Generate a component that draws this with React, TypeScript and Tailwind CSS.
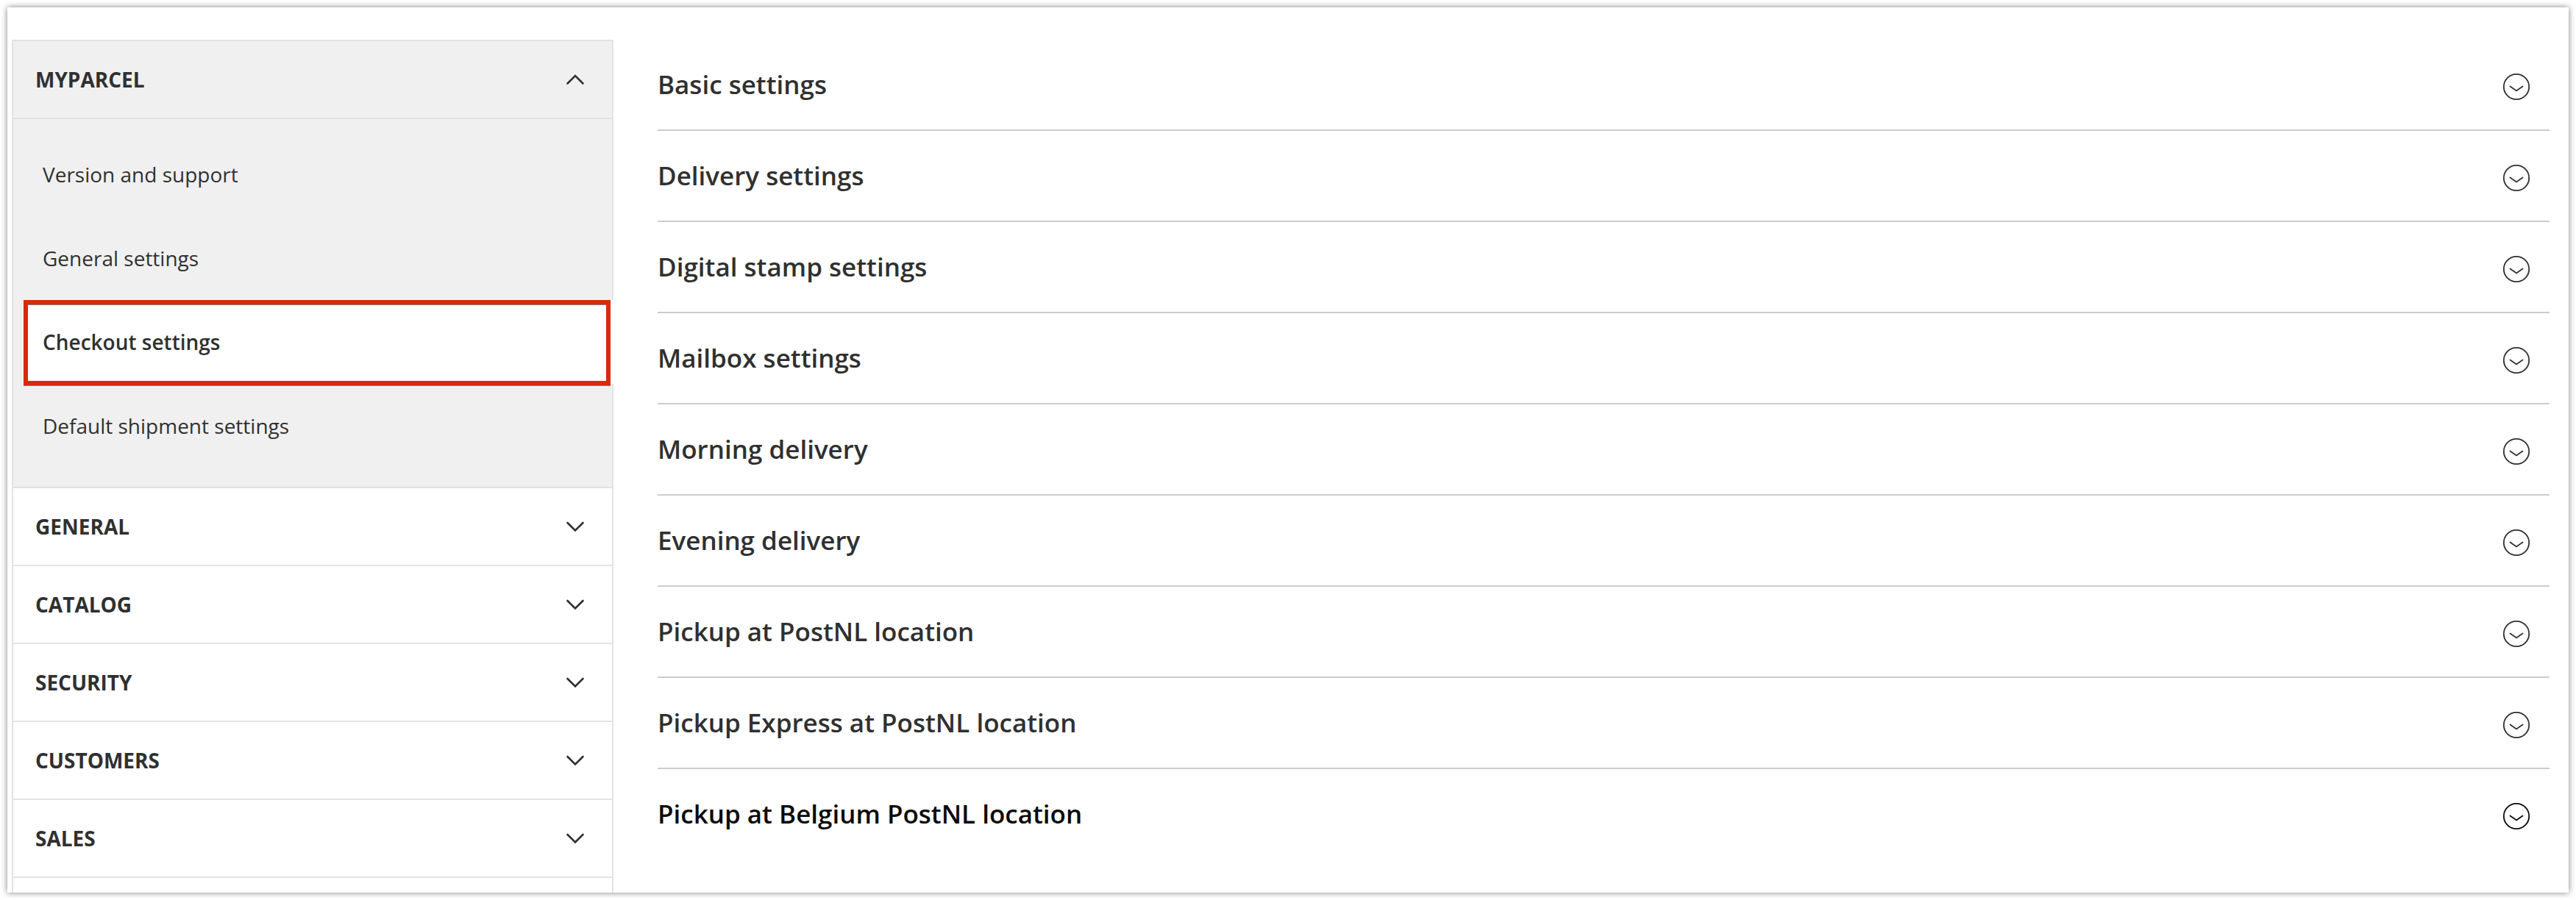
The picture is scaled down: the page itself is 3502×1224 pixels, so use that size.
import { useState } from "react";

const subItems = [
  "Version and support",
  "General settings",
  "Checkout settings",
  "Default shipment settings",
];

const groups = ["General", "Catalog", "Security", "Customers", "Sales"];

const sections = [
  "Basic settings",
  "Delivery settings",
  "Digital stamp settings",
  "Mailbox settings",
  "Morning delivery",
  "Evening delivery",
  "Pickup at PostNL location",
  "Pickup Express at PostNL location",
  "Pickup at Belgium PostNL location",
];

function Chevron({ up = false }: { up?: boolean }) {
  return (
    <svg
      className="h-4 w-7 shrink-0"
      viewBox="0 0 28 16"
      fill="none"
      stroke="currentColor"
      strokeWidth="2.6"
      strokeLinecap="round"
      strokeLinejoin="miter"
      aria-hidden="true"
    >
      <path d={up ? "M3.5 13.5 L14 3 L24.5 13.5" : "M3.5 3 L14 13.5 L24.5 3"} />
    </svg>
  );
}

function CircleChevron() {
  return (
    <svg
      className="mt-1.5 size-10 shrink-0"
      viewBox="0 0 40 40"
      fill="none"
      stroke="currentColor"
      strokeWidth="1.8"
      aria-hidden="true"
    >
      <circle cx="20" cy="20" r="17.2" />
      <path d="M11.5 19.5 L20 25.5 L28.5 19.5" strokeLinecap="round" />
    </svg>
  );
}

export default function App() {
  const [active, setActive] = useState("Checkout settings");

  return (
    <div className="h-screen bg-white p-2.5 font-['Open_Sans',sans-serif] text-[#303030]">
      <div className="flex h-full overflow-hidden bg-white pl-1.5 pr-[26px] pt-11 shadow-[0_0_8px_rgba(0,0,0,0.5)]">
        <aside className="w-[818px] shrink-0 border-x-2 border-t-2 border-[#e3e3e3]">
          <nav aria-label="Configuration">
            <button
              type="button"
              aria-expanded="true"
              className="flex h-[106px] w-full items-center justify-between border-b-2 border-[#e3e3e3] bg-[#f0f0f0] pl-[30px] pr-9 text-left text-[28px] font-bold uppercase"
            >
              MyParcel
              <Chevron up />
            </button>
            <ul className="border-b-2 border-[#e3e3e3] bg-[#f0f0f0] pb-[26px] pl-3.5 pt-[18px]">
              {subItems.map((item) => (
                <li key={item}>
                  {item === active ? (
                    <div className="-mr-0.5 h-[114px] bg-white pr-1">
                      <a
                        href="#"
                        aria-current="page"
                        className="flex h-[116px] items-center border-6 border-[#d9290b] bg-white pb-0.5 pl-5 text-[28px] font-semibold shadow-[0_1px_0_#808080,inset_0_1px_0_#808080]"
                      >
                        {item}
                      </a>
                    </div>
                  ) : (
                    <a
                      href="#"
                      onClick={(e) => {
                        e.preventDefault();
                        setActive(item);
                      }}
                      className="flex h-[114px] items-center pl-[26px] text-[28px]"
                    >
                      {item}
                    </a>
                  )}
                </li>
              ))}
            </ul>
            {groups.map((group) => (
              <button
                key={group}
                type="button"
                aria-expanded="false"
                className="flex h-[106px] w-full items-center justify-between border-b-2 border-[#e3e3e3] bg-white pl-[30px] pr-9 text-left text-[28px] font-bold uppercase"
              >
                {group}
                <Chevron />
              </button>
            ))}
          </nav>
        </aside>
        <main className="ml-[60px] min-w-0 flex-1">
          {sections.map((section) => (
            <h2 key={section} className="border-[#cccccc] not-last:border-b-2">
              <button
                type="button"
                aria-expanded="false"
                className="flex h-[122px] w-full items-center justify-between pr-[25px] text-left text-[35px] font-semibold hover:text-black in-[h2:last-child]:text-[#0a0a0a]"
              >
                {section}
                <CircleChevron />
              </button>
            </h2>
          ))}
        </main>
      </div>
    </div>
  );
}
